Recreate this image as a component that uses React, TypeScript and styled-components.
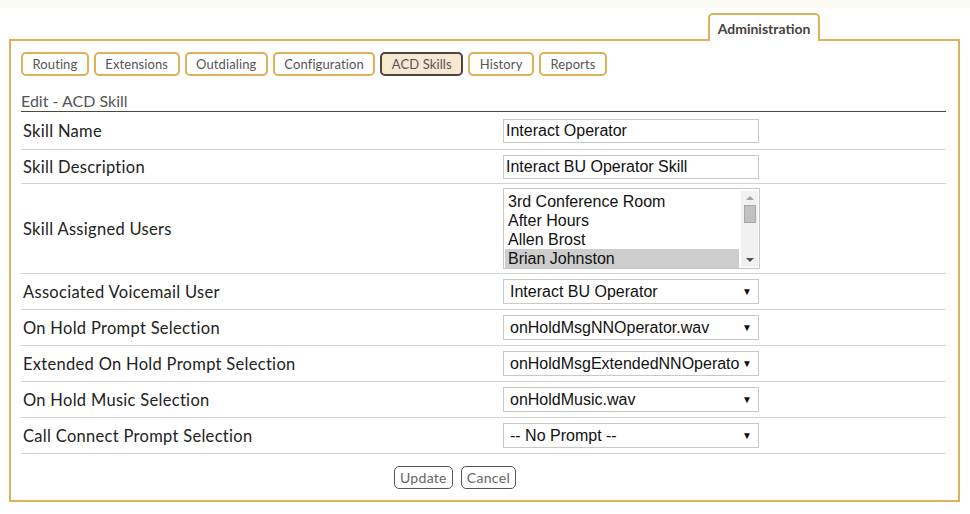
import React from 'react'
import styled, { createGlobalStyle } from 'styled-components'

const GlobalStyle = createGlobalStyle`
  html, body {
    margin: 0;
    padding: 0;
    background: #ffffff;
  }
  body {
    font-family: 'Lato', 'DejaVu Sans', sans-serif;
    color: #222;
  }
`

const gold = '#ddb05a'

const Page = styled.div`
  width: 970px;
  height: 514px;
  overflow: hidden;
  box-sizing: border-box;
  padding: 0 10px 0 9px;
  background: linear-gradient(#fbfaf2 0, #fbfaf2 8px, #ffffff 8px);
`

const TabBar = styled.div`
  display: flex;
  justify-content: flex-end;
  padding: 13px 140px 0 0;
  height: 26px;
`

const TopTab = styled.div`
  position: relative;
  z-index: 1;
  box-sizing: border-box;
  width: 112px;
  height: 28px;
  border: 2px solid ${gold};
  border-bottom: none;
  border-radius: 5px 5px 0 0;
  background: #fff;
  display: flex;
  justify-content: center;
  padding-top: 5px;
  font-family: 'Lato', sans-serif;
  font-weight: 700;
  font-size: 14px;
  color: #4a4040;
`

const Panel = styled.div`
  box-sizing: border-box;
  height: 463px;
  border: 2px solid ${gold};
  padding: 11px 12px 0 10px;
  background: #fff;
`

const SubNav = styled.div`
  display: flex;
  gap: 5px;
`

const NavButton = styled.div<{ $active?: boolean }>`
  box-sizing: border-box;
  height: 24px;
  padding: 0 9.5px;
  display: flex;
  align-items: center;
  border: 2px solid ${(p) => (p.$active ? '#4d4538' : gold)};
  border-radius: 5px;
  background: ${(p) => (p.$active ? '#f6e8d3' : '#fff')};
  font-family: 'Lato', sans-serif;
  font-size: 13px;
  letter-spacing: 0.1px;
  color: #555;
`

const SectionTitle = styled.div`
  margin-top: 14px;
  padding-bottom: 0;
  border-bottom: 1px solid #4a4a3c;
  font-family: 'Lato', sans-serif;
  font-size: 16px;
  color: #555;
  line-height: 21px;
`

const Row = styled.div<{ $h: number }>`
  display: grid;
  grid-template-columns: 482px 1fr;
  align-items: center;
  height: ${(p) => p.$h}px;
  border-bottom: 1px solid #d2d2d2;
  box-sizing: border-box;
`

const Label = styled.div`
  padding-left: 2px;
  font-family: 'Lato', sans-serif;
  font-size: 16.5px;
  letter-spacing: 0.3px;
  color: #222;
`

const TextInput = styled.div`
  box-sizing: border-box;
  width: 256px;
  height: 24px;
  border: 1px solid #c8c8c8;
  padding: 0 2px;
  display: flex;
  align-items: center;
  font-family: 'Liberation Sans', Arial, sans-serif;
  font-size: 16px;
  color: #111;
`

const ListBox = styled.div`
  box-sizing: border-box;
  width: 257px;
  height: 81px;
  border: 1px solid #c8c8c8;
  display: flex;
  padding: 2px 1px 1px 1px;
`

const ListItems = styled.div`
  flex: 1;
  display: flex;
  flex-direction: column;
  padding-top: 1px;
`

const ListItem = styled.div<{ $selected?: boolean }>`
  height: 19px;
  line-height: 19px;
  padding-left: 3px;
  font-family: 'Liberation Sans', Arial, sans-serif;
  font-size: 16px;
  color: #111;
  background: ${(p) => (p.$selected ? '#cdcdcd' : 'transparent')};
`

const ScrollTrack = styled.div`
  width: 17px;
  background: #f1f1f1;
  display: flex;
  flex-direction: column;
  align-items: center;
  margin-left: 2px;
`

const ScrollSpacer = styled.div`
  flex: 1;
`

const ScrollArrow = styled.div<{ $down?: boolean }>`
  height: 14px;
  display: flex;
  align-items: center;
  justify-content: center;
  &::before {
    content: '';
    border-left: 4px solid transparent;
    border-right: 4px solid transparent;
    ${(p) => (p.$down ? 'border-top: 4px solid #505050;' : 'border-bottom: 4px solid #a3a3a3;')}
  }
`

const ScrollThumb = styled.div`
  width: 12px;
  height: 18px;
  background: #c1c1c1;
  border: 1px solid #a8a8a8;
  box-sizing: border-box;
`

const Select = styled.div`
  box-sizing: border-box;
  width: 256px;
  height: 25px;
  border: 1px solid #c8c8c8;
  padding: 0 6px 0 6px;
  display: flex;
  align-items: center;
  font-family: 'Liberation Sans', Arial, sans-serif;
  font-size: 16px;
  color: #111;
  white-space: nowrap;
`

const SelectText = styled.span`
  width: 230px;
  overflow: hidden;
`

const Caret = styled.span`
  flex: 1;
  text-align: right;
  font-size: 10px;
  color: #111;
`

const Actions = styled.div`
  display: flex;
  justify-content: center;
  gap: 8px;
  padding-top: 12px;
  padding-right: 57px;
`

const ActionButton = styled.div`
  box-sizing: border-box;
  height: 23px;
  padding: 0 5px;
  display: flex;
  align-items: center;
  border: 1px solid #555;
  border-radius: 5px;
  font-family: 'Lato', sans-serif;
  font-size: 14px;
  letter-spacing: 0.3px;
  color: #666;
`

const navItems = ['Routing', 'Extensions', 'Outdialing', 'Configuration', 'ACD Skills', 'History', 'Reports']

const users = ['3rd Conference Room', 'After Hours', 'Allen Brost', 'Brian Johnston']

const selects = [
  ['Associated Voicemail User', 'Interact BU Operator'],
  ['On Hold Prompt Selection', 'onHoldMsgNNOperator.wav'],
  ['Extended On Hold Prompt Selection', 'onHoldMsgExtendedNNOperato'],
  ['On Hold Music Selection', 'onHoldMusic.wav'],
  ['Call Connect Prompt Selection', '-- No Prompt --'],
]

export default function App() {
  return (
    <Page>
      <GlobalStyle />
      <TabBar>
        <TopTab>Administration</TopTab>
      </TabBar>
      <Panel>
        <SubNav>
          {navItems.map((n) => (
            <NavButton key={n} $active={n === 'ACD Skills'}>
              {n}
            </NavButton>
          ))}
        </SubNav>
        <SectionTitle>Edit - ACD Skill</SectionTitle>
        <Row $h={38}>
          <Label>Skill Name</Label>
          <TextInput>Interact Operator</TextInput>
        </Row>
        <Row $h={34}>
          <Label>Skill Description</Label>
          <TextInput>Interact BU Operator Skill</TextInput>
        </Row>
        <Row $h={90}>
          <Label>Skill Assigned Users</Label>
          <ListBox>
            <ListItems>
              {users.map((u) => (
                <ListItem key={u} $selected={u === 'Brian Johnston'}>
                  {u}
                </ListItem>
              ))}
            </ListItems>
            <ScrollTrack>
              <ScrollArrow />
              <ScrollThumb />
              <ScrollSpacer />
              <ScrollArrow $down />
            </ScrollTrack>
          </ListBox>
        </Row>
        {selects.map(([label, value]) => (
          <Row key={label} $h={36}>
            <Label>{label}</Label>
            <Select>
              <SelectText>{value}</SelectText>
              <Caret>▼</Caret>
            </Select>
          </Row>
        ))}
        <Actions>
          <ActionButton>Update</ActionButton>
          <ActionButton>Cancel</ActionButton>
        </Actions>
      </Panel>
    </Page>
  )
}
